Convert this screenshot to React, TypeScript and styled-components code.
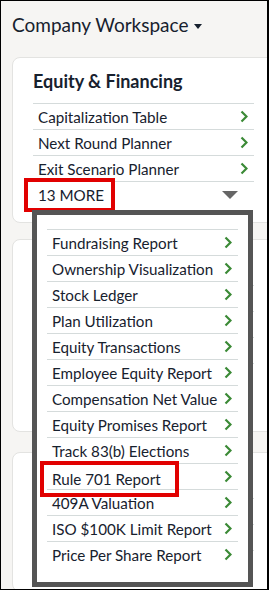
import { createGlobalStyle, styled } from "styled-components";

const GlobalStyle = createGlobalStyle`
  html, body {
    margin: 0;
    padding: 0;
    background: #f6f5f3;
  }
  body {
    font-family: Lato, "Liberation Sans", sans-serif;
    color: #17212e;
  }
`;

const equity = ["Capitalization Table", "Next Round Planner", "Exit Scenario Planner"];

const moreReports = [
  "Fundraising Report",
  "Ownership Visualization",
  "Stock Ledger",
  "Plan Utilization",
  "Equity Transactions",
  "Employee Equity Report",
  "Compensation Net Value",
  "Equity Promises Report",
  "Track 83(b) Elections",
  "Rule 701 Report",
  "409A Valuation",
  "ISO $100K Limit Report",
  "Price Per Share Report",
];

const people = ["Stakeholders", "Option Grants", "Vesting Schedules", "Board Approvals"];
const tax = ["Tax Documents", "Compliance Calendar", "Audit Trail"];

function Chevron() {
  return (
    <svg width="8" height="13" viewBox="0 0 8 13">
      <polyline points="1.5,1.5 6.5,6.5 1.5,11.5" fill="none" stroke="#3b8a36" strokeWidth="2.2" />
    </svg>
  );
}

export default function App() {
  return (
    <Page>
      <GlobalStyle />
      <Header>
        Company Workspace <Caret />
      </Header>
      <Cards>
        <Card>
          <CardTitle>Equity &amp; Financing</CardTitle>
          <List>
            {equity.map((name) => (
              <Row key={name}>
                <span>{name}</span>
                <Chevron />
              </Row>
            ))}
            <Row>
              <Highlight>13 MORE</Highlight>
              <MoreArrow />
            </Row>
          </List>
          <Menu>
            {moreReports.map((name) => (
              <Row key={name}>
                {name === "Rule 701 Report" ? <Highlight $tall>{name}</Highlight> : <span>{name}</span>}
                <Chevron />
              </Row>
            ))}
          </Menu>
        </Card>
        <Card $extra={27}>
          <CardTitle>People &amp; Grants</CardTitle>
          <List>
            {people.map((name) => (
              <Row key={name}>
                <span>{name}</span>
                <Chevron />
              </Row>
            ))}
          </List>
        </Card>
        <Card $gap={4}>
          <CardTitle>Tax &amp; Compliance</CardTitle>
          <List>
            {tax.map((name) => (
              <Row key={name}>
                <span>{name}</span>
                <Chevron />
              </Row>
            ))}
          </List>
        </Card>
      </Cards>
    </Page>
  );
}

const Page = styled.div`
  box-sizing: border-box;
  width: 269px;
  height: 590px;
  overflow: hidden;
  border: 1px solid #000;
  border-right-width: 2px;
  padding: 12px 0 0 11px;
  background: #f6f5f3;
`;

const Header = styled.h1`
  margin: 0;
  display: flex;
  align-items: center;
  gap: 5px;
  font-size: 19px;
  font-weight: 400;
  line-height: 24px;
  color: #17212e;
`;

const Caret = styled.span`
  width: 0;
  height: 0;
  border-left: 4.5px solid transparent;
  border-right: 4.5px solid transparent;
  border-top: 5px solid #17212e;
  margin-top: 2px;
`;

const Cards = styled.div`
  display: flex;
  flex-direction: column;
  gap: 16px;
  margin-top: 20px;
`;

const Card = styled.section<{ $extra?: number; $gap?: number }>`
  position: relative;
  box-sizing: border-box;
  width: 263px;
  margin-top: ${(p) => p.$gap ?? 0}px;
  padding: 11px 20px ${(p) => 15 + (p.$extra ?? 0)}px 20px;
  background: #fff;
  border: 1px solid #e3e3e1;
  border-radius: 8px;
`;

const CardTitle = styled.h2`
  margin: 0;
  padding-bottom: 10px;
  font-size: 18px;
  font-weight: 700;
  line-height: 24px;
  color: #17212e;
`;

const List = styled.div`
  display: flex;
  flex-direction: column;
`;

const Row = styled.div`
  display: flex;
  align-items: center;
  justify-content: space-between;
  height: 26px;
  padding: 0 6px 0 5px;
  border-top: 1px solid #d5dbdb;
  box-sizing: border-box;
  font-size: 15.2px;
  line-height: 18px;
  white-space: nowrap;
`;

const Highlight = styled.span<{ $tall?: boolean }>`
  display: inline-flex;
  align-items: center;
  box-sizing: border-box;
  height: ${(p) => (p.$tall ? 36 : 34)}px;
  margin: ${(p) => (p.$tall ? "-1px 0 -5px -12px" : "-4px 0 -4px -14px")};
  padding: 0 ${(p) => (p.$tall ? 14 : 7)}px 0 ${(p) => (p.$tall ? 8 : 10)}px;
  border: 4px solid #e10000;
`;

const MoreArrow = styled.span`
  width: 0;
  height: 0;
  margin-right: 10px;
  border-left: 8px solid transparent;
  border-right: 8px solid transparent;
  border-top: 8px solid #666;
`;

const Menu = styled.div`
  position: absolute;
  z-index: 5;
  top: 152px;
  left: 19px;
  width: 221px;
  box-sizing: border-box;
  padding: 14px 10px 15px;
  background: #fff;
  border: 5px solid #555;
`;
